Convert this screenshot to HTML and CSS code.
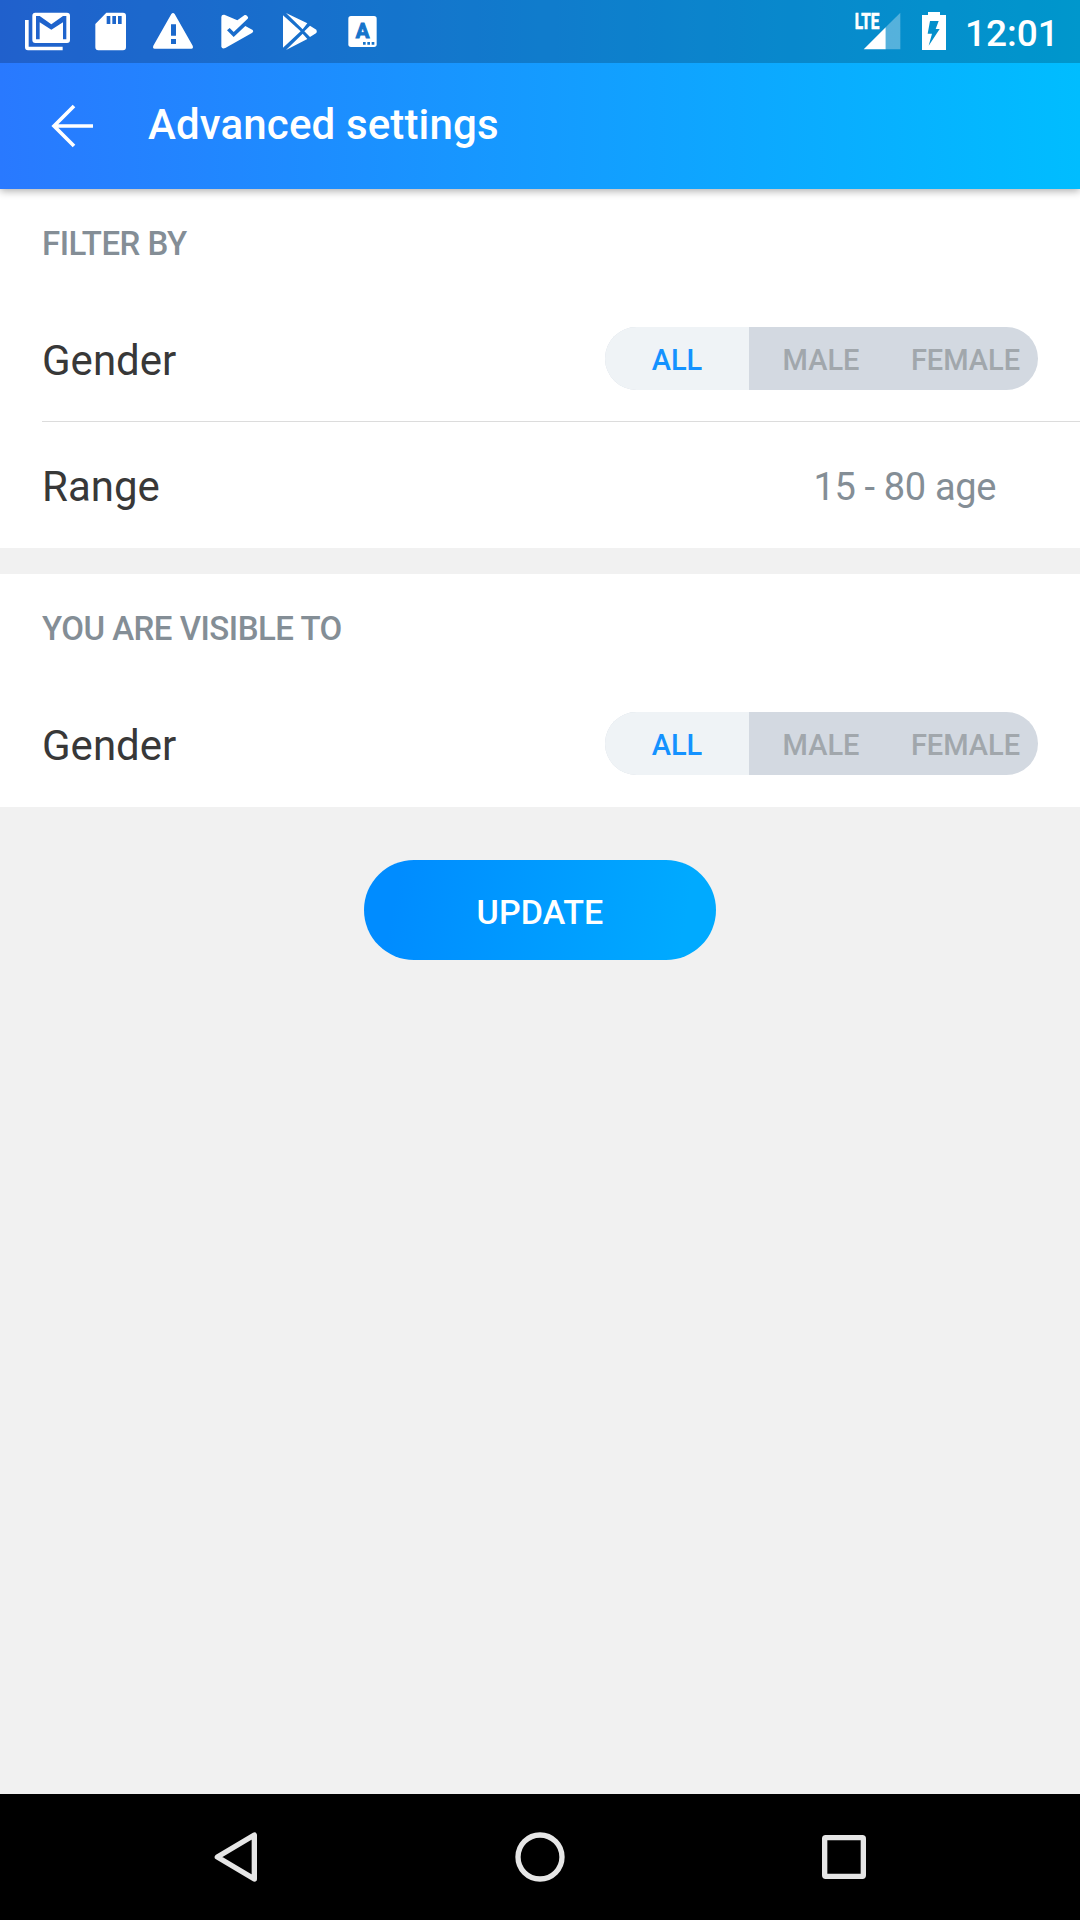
FILE: index.html
```html
<!DOCTYPE html>
<html lang="en">
<head>
<meta charset="utf-8">
<title>Advanced settings</title>
<link rel="stylesheet" href="styles.css">
</head>
<body>
<div class="screen">
  <header class="top">
    <div class="status">
      <div class="status-icons">
        <svg viewBox="48 0 189 189"><path d="M75 60h11v80h102v11H84q-9 0-9-9z"/><path fill-rule="evenodd" d="M106 38h95q9 0 9 9v73q0 9-9 9h-95q-9 0-9-9V47q0-9 9-9zM108 48v70h11V67l35 22 35-22v51h10V48h-10l-35 25-35-25z"/></svg>
        <svg viewBox="237 0 189 189"><path fill-rule="evenodd" d="M319 38h50q9 0 9 9v95q0 9-9 9h-74q-9 0-9-9V72zM320 48v24h11V48zm17 0v24h11V48zm17 0v24h11V48z"/></svg>
        <svg viewBox="426 0 189 189"><path fill-rule="evenodd" d="M514 42q5-6 10 0l54 95q3 9-4 9H464q-7 0-4-9zM513 73v34h15V73zm0 44v15h15v-15z"/></svg>
        <svg viewBox="15 0 189 189"><path d="M64 51q0-8 9-7l39 17 22-16q3-1 5 1l5 5q1 3-1 5l-42 40-12-12-8 7 20 20 35-33 22 12q4 4-1 8l-81 46q-10 4-12-4z"/></svg>
        <svg viewBox="204 0 189 189"><path d="M249 46l53 48-53 49zM258 39l64 31-14 18zM258 150l50-49 14 16zM330 77l19 12q3 5 0 10l-19 12-17-17z"/></svg>
        <svg viewBox="393 0 189 189"><rect x="445" y="48" width="85" height="93" rx="8"/><g class="cut"><text class="badge-letter" x="487.500" y="115">A</text><path d="M489 126h8v8h-8zm13 0h8v8h-8zm13 0h8v8h-8z"/></g></svg>
      </div>
      <div class="status-right">
        <svg class="signal" viewBox="45 0 138 189"><text class="lte" x="44" y="87" textLength="74" lengthAdjust="spacingAndGlyphs">LTE</text><path class="faint" d="M137 82l44-44v110h-44z"/><path d="M71 148l66-66v66z"/></svg>
        <svg class="battery" viewBox="246 0 72 189"><path fill-rule="evenodd" d="M264 36h36v9h18v105h-72V45h18zM270 63l-7 38h13l-10 36 33-50h-12l9-24z"/></svg>
        <span class="clock">12:01</span>
      </div>
    </div>
    <div class="toolbar">
      <svg class="back" viewBox="150 309 138 138"><path d="M279 378H162M222 318l-60 60 60 60"/></svg>
      <h1 class="title">Advanced settings</h1>
    </div>
  </header>

  <main>
    <section class="panel">
      <h2 class="heading">FILTER BY</h2>
      <div class="row divided">
        <span class="label">Gender</span>
        <div class="segments"><span class="segment active">ALL</span><span class="segment">MALE</span><span class="segment">FEMALE</span></div>
      </div>
      <div class="row">
        <span class="label">Range</span>
        <span class="value">15 - 80 age</span>
      </div>
    </section>
    <section class="panel">
      <h2 class="heading">YOU ARE VISIBLE TO</h2>
      <div class="row last">
        <span class="label">Gender</span>
        <div class="segments"><span class="segment active">ALL</span><span class="segment">MALE</span><span class="segment">FEMALE</span></div>
      </div>
    </section>
    <button class="update">UPDATE</button>
  </main>

  <nav class="navbar">
    <svg viewBox="78 141 180 180"><path d="M112 231l111-66v132z"/></svg>
    <svg viewBox="990 141 180 180"><circle cx="1080" cy="231" r="66"/></svg>
    <svg viewBox="1002 141 180 180"><rect x="1034" y="173" width="116" height="116" rx="3"/></svg>
  </nav>
</div>
</body>
</html>
```
FILE: styles.css
```css
* { box-sizing: border-box; }

body {
  margin: 0;
  font-family: Roboto, sans-serif;
}

.screen {
  display: flex;
  flex-direction: column;
  width: 1080px;
  height: 1920px;
  overflow: hidden;
  background: #f1f1f1;
}

.top {
  position: relative;
  height: 189px;
  background: linear-gradient(90deg, #2979ff, #00bdff);
  box-shadow: 0 2px 8px rgba(0, 0, 0, 0.33);
}

.status {
  display: flex;
  justify-content: space-between;
  height: 63px;
  padding: 0 26px 0 16px;
  background: rgba(0, 0, 0, 0.2);
  color: #fff;
}

.status svg { fill: #fff; }
.status-icons, .status-right { display: flex; }
.status-icons svg { width: 63px; height: 63px; }
.status .cut { fill: #1674cb; }

.badge-letter {
  font-size: 61px;
  font-weight: 700;
  text-anchor: middle;
  stroke: #1674cb;
  stroke-width: 3px;
}

.signal { width: 46px; height: 63px; margin-right: 21px; }
.signal .faint { fill-opacity: 0.32; }
.lte { font-size: 64px; font-weight: 700; stroke: #fff; stroke-width: 2px; }
.battery { width: 24px; height: 63px; margin-right: 19px; }

.clock {
  width: 89px;
  font-size: 37px;
  font-weight: 500;
  line-height: 67px;
  white-space: nowrap;
}

.toolbar {
  display: flex;
  align-items: center;
  height: 126px;
  padding-left: 50px;
}

.back {
  width: 46px;
  height: 46px;
  fill: none;
  stroke: #fff;
  stroke-width: 11px;
}

.title {
  margin: 0 0 0 52px;
  font-size: 42px;
  font-weight: 500;
  letter-spacing: 0.15px;
  line-height: 50px;
  padding-bottom: 2px;
}

.title, .update { color: #fff; }

main {
  display: flex;
  flex: 1;
  flex-direction: column;
  align-items: center;
}

.panel {
  width: 100%;
  margin-bottom: 26px;
  background: #fff;
}

.heading {
  height: 107px;
  margin: 0;
  padding: 1px 42px 0;
  color: #848e96;
  font-size: 33px;
  font-weight: 500;
  letter-spacing: -0.5px;
  line-height: 107px;
}

.row {
  display: flex;
  align-items: center;
  justify-content: space-between;
  height: 126px;
  margin-left: 42px;
  padding-right: 42px;
}

.divided { border-bottom: 1px solid #dcdcdc; }
.last { padding-bottom: 1px; }

.label {
  padding-top: 4px;
  color: #383838;
  font-size: 42px;
  line-height: 50px;
}

.value {
  padding: 3px 42px 0 0;
  color: #848e96;
  font-size: 38px;
  letter-spacing: -0.35px;
}

.segments {
  display: grid;
  grid-template-columns: 144px 144px 145px;
  height: 63px;
  overflow: hidden;
  border-radius: 32px;
  background: #d3d9e1;
}

.segment {
  color: #a1a7ac;
  font-size: 29px;
  font-weight: 500;
  line-height: 66px;
  text-align: center;
}

.active { background: #eff3f6; color: #1492ff; }

.update {
  width: 352px;
  height: 100px;
  margin-top: 27px;
  padding: 4px 0 0;
  border: 0;
  border-radius: 50px;
  background: linear-gradient(100deg, #008cff 10%, #00aaff 90%);
  font: 500 34px/96px Roboto, sans-serif;
  letter-spacing: 0.1px;
}

.navbar {
  display: flex;
  justify-content: center;
  gap: 244px;
  height: 126px;
  padding-top: 33px;
  background: #000;
}

.navbar svg {
  width: 60px;
  height: 60px;
  fill: none;
  stroke: #e6e6e6;
  stroke-width: 16px;
  stroke-linejoin: round;
}
```
